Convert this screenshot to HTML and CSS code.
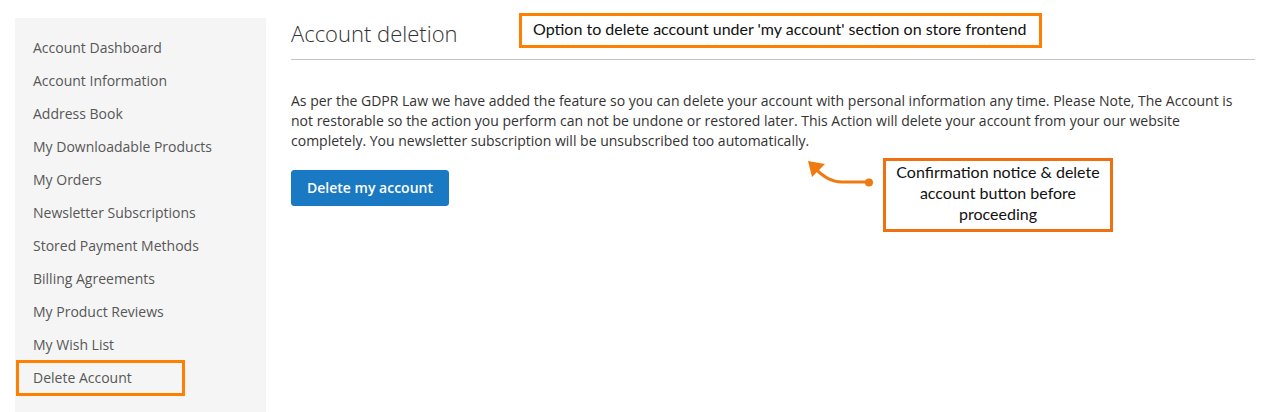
FILE: index.html
```html
<!DOCTYPE html>
<html lang="en">
<head>
<meta charset="utf-8">
<title>Account deletion</title>
<link rel="stylesheet" href="styles.css">
</head>
<body>
<div class="page">
  <aside class="sidebar">
    <ul class="nav">
      <li class="nav-item">Account Dashboard</li>
      <li class="nav-item">Account Information</li>
      <li class="nav-item">Address Book</li>
      <li class="nav-item">My Downloadable Products</li>
      <li class="nav-item">My Orders</li>
      <li class="nav-item">Newsletter Subscriptions</li>
      <li class="nav-item">Stored Payment Methods</li>
      <li class="nav-item">Billing Agreements</li>
      <li class="nav-item">My Product Reviews</li>
      <li class="nav-item">My Wish List</li>
      <li class="nav-item nav-item-marked">Delete Account<span class="mark-box"></span></li>
    </ul>
  </aside>
  <main class="content">
    <div class="title-bar">
      <h1 class="page-title">Account deletion</h1>
    </div>
    <p class="notice">As per the GDPR Law we have added the feature so you can delete your account with personal information any time. Please Note, The Account is not restorable so the action you perform can not be undone or restored later. This Action will delete your account from your our website completely. You newsletter subscription will be unsubscribed too automatically.</p>
    <button class="btn-primary" type="button">Delete my account</button>
  </main>

  <div class="callout callout-top">Option to delete account under 'my account' section on store frontend</div>
  <div class="callout callout-side">Confirmation notice &amp; delete account button before proceeding</div>
  <svg class="arrow" width="80" height="45" viewBox="0 0 80 45" aria-hidden="true">
    <path d="M14 17 Q27 32 42 32 L68 32" fill="none" stroke="#f07a12" stroke-width="3" stroke-linecap="round"/>
    <polygon points="8,11 25,14 12,27" fill="#f07a12"/>
    <circle cx="69" cy="32.5" r="4" fill="#f07a12"/>
  </svg>
</div>
</body>
</html>
```

FILE: styles.css
```css
* { box-sizing: border-box; }

html, body {
  margin: 0;
  padding: 0;
  background: #ffffff;
}

body {
  font-family: "Open Sans", "Noto Sans", sans-serif;
  font-size: 14px;
  color: #333333;
  width: 1275px;
  height: 412px;
  overflow: hidden;
}

.page {
  position: relative;
  display: flex;
  gap: 25px;
  padding: 18px 20px 0 15px;
  height: 412px;
}

.sidebar {
  width: 251px;
  flex: none;
  background: #f5f5f5;
  padding: 13px 0 20px 0;
}

.nav {
  list-style: none;
  margin: 0;
  padding: 0;
}

.nav-item {
  position: relative;
  padding-left: 18px;
  line-height: 33px;
  height: 33px;
  color: #575757;
  font-size: 14px;
}

.mark-box {
  position: absolute;
  left: 1px;
  top: -1px;
  width: 169px;
  height: 36px;
  border: 3px solid #ff8000;
}

.content {
  flex: 1;
  min-width: 0;
}

.title-bar {
  padding: 1px 0 12px 0;
  border-bottom: 1px solid #c6c6c6;
}

.page-title {
  margin: 0;
  font-size: 22px;
  line-height: 28px;
  font-weight: 300;
  color: #333333;
}

.notice {
  margin: 31px 0 0 0;
  line-height: 20px;
  font-size: 14px;
  color: #333333;
}

.btn-primary {
  margin-top: 19px;
  background: #1979c3;
  border: 1px solid #1979c3;
  border-radius: 3px;
  color: #ffffff;
  font-family: "Open Sans", "Noto Sans", sans-serif;
  font-size: 14px;
  font-weight: 600;
  line-height: 22px;
  padding: 6px 15px;
  height: 36px;
  width: 158px;
  cursor: pointer;
}

.callout {
  position: absolute;
  background: #ffffff;
  font-family: "Lato", "Open Sans", sans-serif;
  font-size: 16px;
  color: #111111;
}

.callout-top {
  left: 519px;
  top: 13px;
  width: 523px;
  height: 35px;
  border: 3px solid #ff8000;
  padding-left: 11px;
  line-height: 26px;
}

.callout-side {
  left: 883px;
  top: 158px;
  width: 230px;
  height: 74px;
  border: 3px solid #f07010;
  text-align: center;
  line-height: 21px;
  padding: 0 6px;
}

.arrow {
  position: absolute;
  left: 800px;
  top: 150px;
}
```
